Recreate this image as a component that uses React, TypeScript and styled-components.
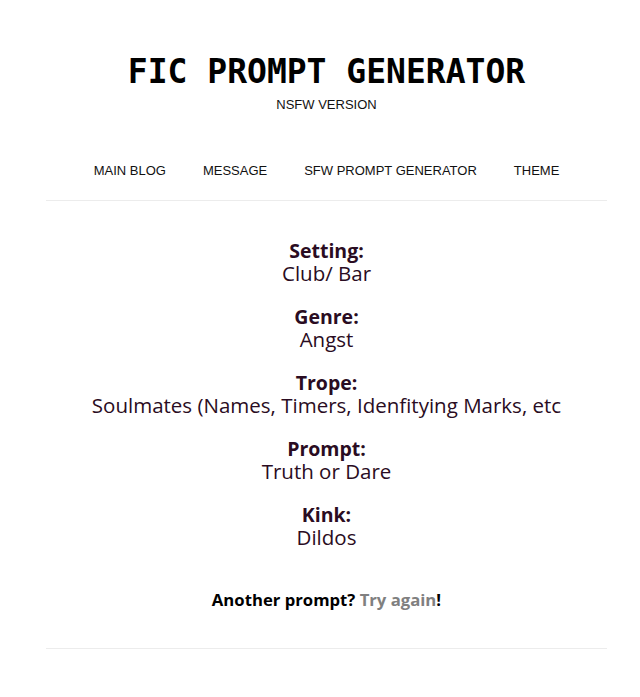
import React from "react";
import styled, { createGlobalStyle } from "styled-components";

const Global = createGlobalStyle`
  html, body { margin: 0; padding: 0; background: #ffffff; }
  body { font-family: "Liberation Sans", Arial, sans-serif; }
`;

const Page = styled.div`
  width: 561px;
  margin-left: 46px;
  display: flex;
  flex-direction: column;
  align-items: stretch;
`;

const Header = styled.header`
  display: flex;
  flex-direction: column;
  align-items: center;
  padding-top: 52px;
`;

const Title = styled.h1`
  margin: 0;
  font-family: "DejaVu Sans Mono", "Liberation Mono", monospace;
  font-weight: bold;
  font-size: 33px;
  line-height: 40px;
  color: #000;
`;

const Subtitle = styled.div`
  font-family: "Liberation Sans", Arial, sans-serif;
  font-size: 13px;
  line-height: 16px;
  color: #111;
  margin-top: 5px;
`;

const Nav = styled.nav`
  display: flex;
  justify-content: center;
  gap: 37px;
  margin-top: 49px;
  padding-bottom: 20px;
  border-bottom: 1px solid #ececec;
`;

const NavLink = styled.a`
  font-family: "Liberation Sans", Arial, sans-serif;
  font-size: 13px;
  line-height: 18px;
  color: #111;
  text-decoration: none;
`;

const Results = styled.section`
  display: flex;
  flex-direction: column;
  align-items: center;
  gap: 20px;
  padding-top: 38px;
  font-family: "Open Sans", "Lato", sans-serif;
  color: #2a0c22;
`;

const Item = styled.div`
  display: flex;
  flex-direction: column;
  align-items: center;
`;

const Label = styled.div`
  font-weight: bold;
  font-size: 19.5px;
  line-height: 23px;
`;

const Value = styled.div`
  font-size: 20.5px;
  line-height: 23px;
  white-space: nowrap;
`;

const Again = styled.p`
  margin: 41px 0 0;
  padding-bottom: 38px;
  border-bottom: 1px solid #ececec;
  text-align: center;
  font-family: "Open Sans", "Lato", sans-serif;
  font-weight: bold;
  font-size: 16.7px;
  line-height: 20px;
  color: #000;
`;

const TryLink = styled.a`
  color: #808080;
  text-decoration: none;
`;

const items = [
  { label: "Setting:", value: "Club/ Bar" },
  { label: "Genre:", value: "Angst" },
  { label: "Trope:", value: "Soulmates (Names, Timers, Idenfitying Marks, etc" },
  { label: "Prompt:", value: "Truth or Dare" },
  { label: "Kink:", value: "Dildos" },
];

export default function App() {
  return (
    <>
      <Global />
      <Page>
        <Header>
          <Title>FIC PROMPT GENERATOR</Title>
          <Subtitle>NSFW VERSION</Subtitle>
        </Header>
        <Nav>
          <NavLink href="#">MAIN BLOG</NavLink>
          <NavLink href="#">MESSAGE</NavLink>
          <NavLink href="#">SFW PROMPT GENERATOR</NavLink>
          <NavLink href="#">THEME</NavLink>
        </Nav>
        <Results>
          {items.map((it) => (
            <Item key={it.label}>
              <Label>{it.label}</Label>
              <Value>{it.value}</Value>
            </Item>
          ))}
        </Results>
        <Again>
          Another prompt? <TryLink href="#">Try again</TryLink>!
        </Again>
      </Page>
    </>
  );
}
